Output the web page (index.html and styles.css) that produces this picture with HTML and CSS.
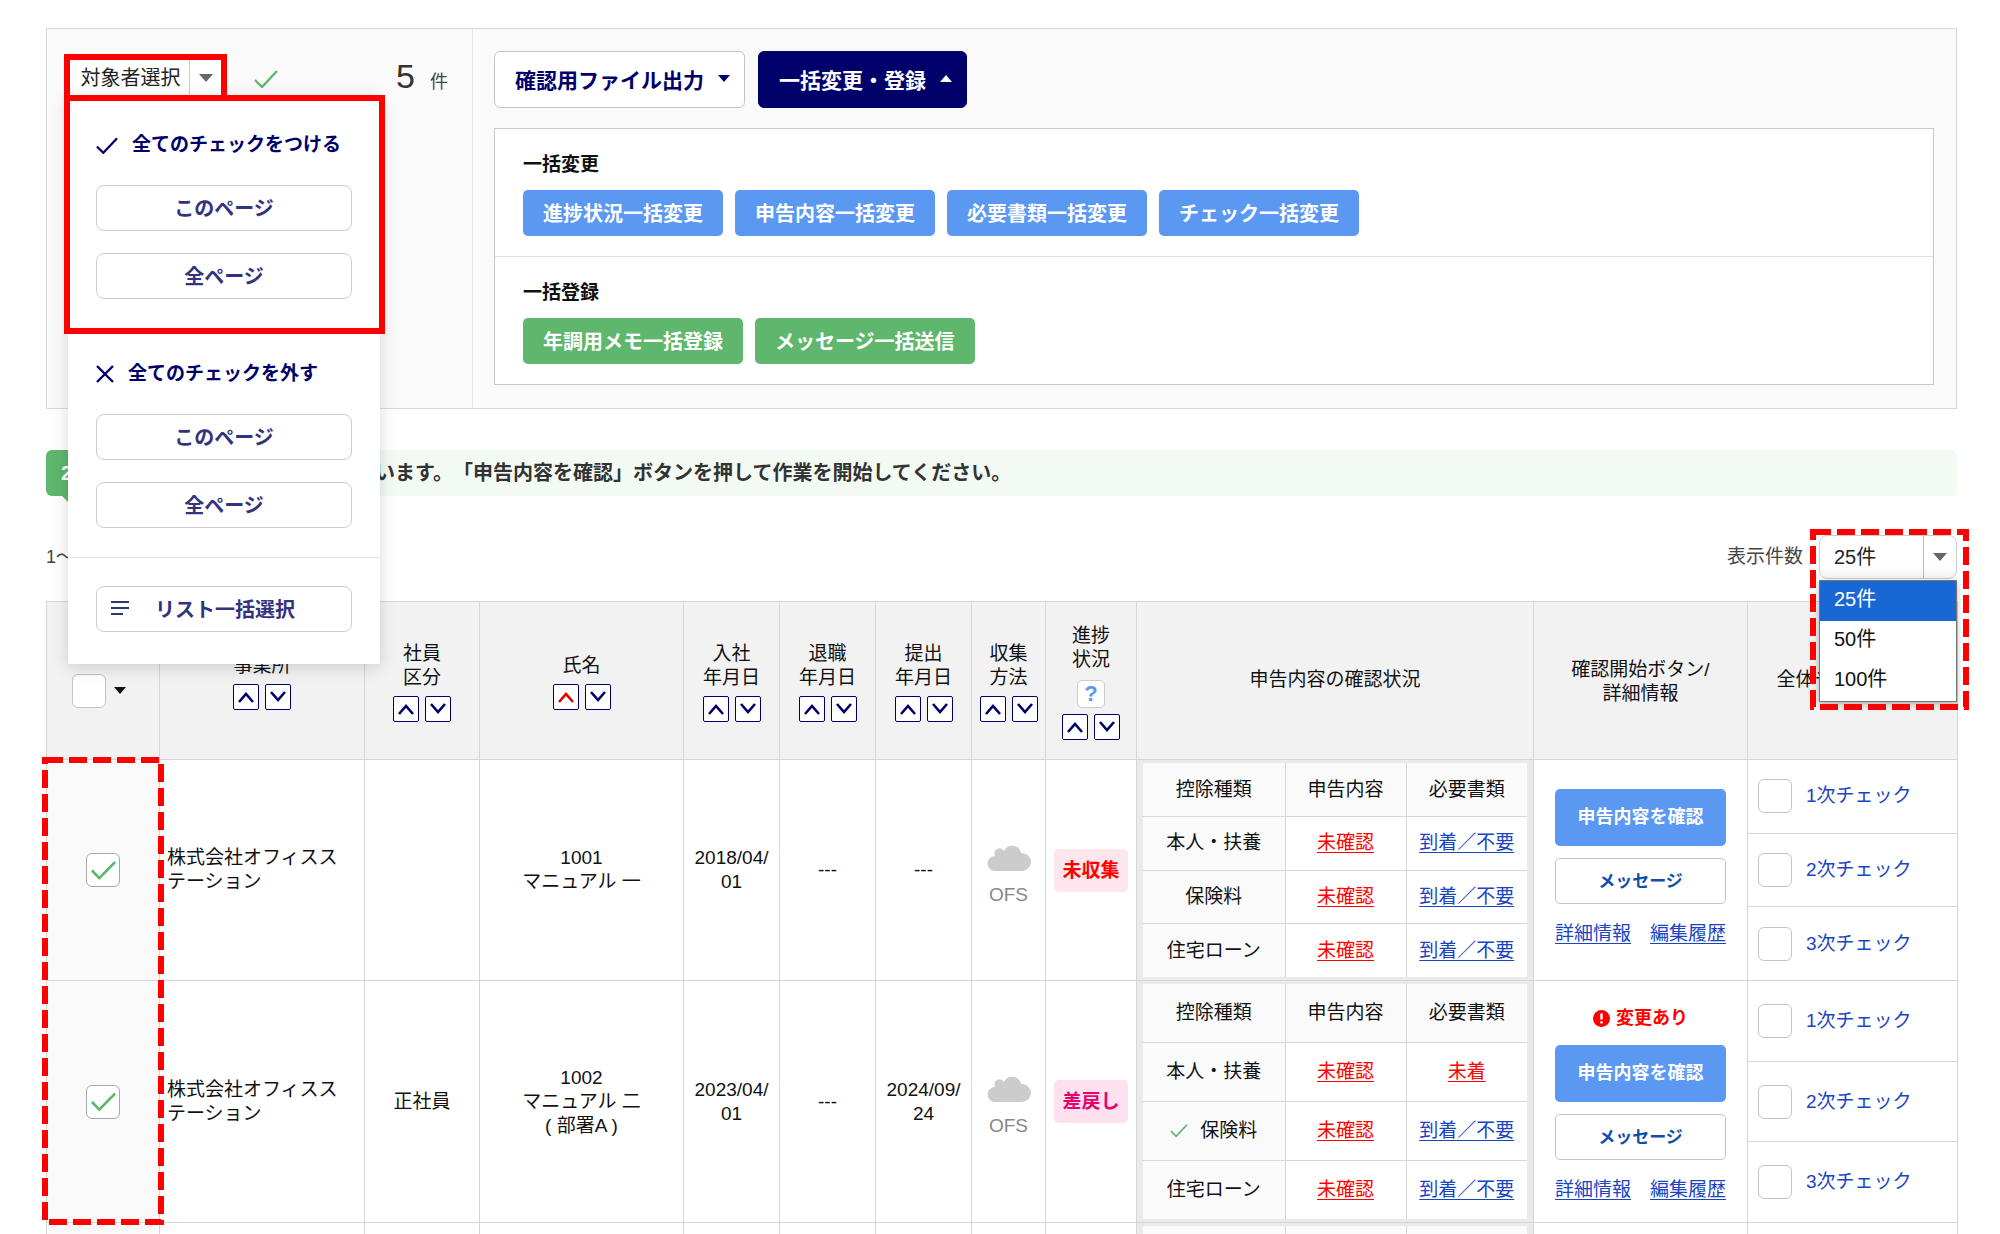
FILE: index.html
```html
<!DOCTYPE html>
<html lang="ja">
<head>
  <meta charset="UTF-8">
  <meta name="viewport" content="width=device-width, initial-scale=1.0">
  <title>年末調整 申告内容の確認</title>
  <link rel="stylesheet" href="styles.css">
</head>
<body>
  <!-- Shared icons -->
  <svg class="sprite" aria-hidden="true">
    <symbol id="check" viewBox="0 0 24 18"><path d="M1 10l7 7L23 1" fill="none" stroke="currentColor" stroke-width="2.4"/></symbol>
    <symbol id="cross" viewBox="0 0 18 18"><path d="M1 1l16 16M17 1L1 17" fill="none" stroke="currentColor" stroke-width="2.4"/></symbol>
    <symbol id="caret" viewBox="0 0 14 8"><path d="M0 0h14L7 8z" fill="currentColor"/></symbol>
    <symbol id="up" viewBox="0 0 16 12"><path d="M1 11l7-8 7 8" fill="none" stroke="currentColor" stroke-width="2.6"/></symbol>
    <symbol id="down" viewBox="0 0 16 12"><path d="M1 1l7 8 7-8" fill="none" stroke="currentColor" stroke-width="2.6"/></symbol>
    <symbol id="cloud" viewBox="0 0 44 28"><path d="M8 28a7.5 7.5 0 0 1 0-15A5 5 0 0 1 17 8a9 9 0 0 1 17 2h1a9 9 0 0 1 0 18z" fill="currentColor"/></symbol>
  </svg>

  <!-- Selection and bulk actions -->
  <section class="panel">
    <div class="selection">
      <div class="target">
        <button type="button" class="target-button">
          <span class="target-label">対象者選択</span>
          <span class="target-caret"><svg width="14" height="8"><use href="#caret"/></svg></span>
        </button>
        <div class="menu">
          <div class="menu-group menu-on">
            <h3><svg width="22" height="17"><use href="#check"/></svg>全てのチェックをつける</h3>
            <button type="button">このページ</button>
            <button type="button">全ページ</button>
            <div class="highlight"></div>
          </div>
          <div class="menu-group menu-off">
            <h3><svg width="18" height="18"><use href="#cross"/></svg>全てのチェックを外す</h3>
            <button type="button">このページ</button>
            <button type="button">全ページ</button>
          </div>
          <div class="menu-group menu-list">
            <button type="button">
              <svg width="18" height="14" viewBox="0 0 18 14"><path d="M0 1h18M0 7h18M0 13h12" stroke="currentColor" stroke-width="2"/></svg>
              リスト一括選択
            </button>
          </div>
        </div>
        <div class="highlight"></div>
      </div>
      <svg class="selection-check" width="24" height="18"><use href="#check"/></svg>
      <p class="selection-count"><strong>5</strong>件</p>
    </div>

    <div class="actions">
      <div class="toolbar">
        <button type="button" class="tool">確認用ファイル出力<svg width="12" height="7"><use href="#caret"/></svg></button>
        <button type="button" class="tool tool-active">一括変更・登録<svg class="flip" width="12" height="7"><use href="#caret"/></svg></button>
      </div>
      <div class="bulk">
        <div class="bulk-group">
          <h2>一括変更</h2>
          <div class="bulk-buttons">
            <button type="button" class="fill blue">進捗状況一括変更</button>
            <button type="button" class="fill blue">申告内容一括変更</button>
            <button type="button" class="fill blue">必要書類一括変更</button>
            <button type="button" class="fill blue">チェック一括変更</button>
          </div>
        </div>
        <div class="bulk-group">
          <h2>一括登録</h2>
          <div class="bulk-buttons">
            <button type="button" class="fill green">年調用メモ一括登録</button>
            <button type="button" class="fill green">メッセージ一括送信</button>
          </div>
        </div>
      </div>
    </div>
  </section>

  <div class="notice">
    <span class="notice-count">2</span>
    <p>います。「申告内容を確認」ボタンを押して作業を開始してください。</p>
  </div>

  <div class="listbar">
    <span class="range">1〜</span>
    <label for="per-page">表示件数</label>
    <div class="per-page">
      <select id="per-page">
        <option>25件</option>
        <option>50件</option>
        <option>100件</option>
      </select>
      <span class="per-page-caret"><svg width="14" height="8"><use href="#caret"/></svg></span>
      <ul class="options">
        <li class="current">25件</li>
        <li>50件</li>
        <li>100件</li>
      </ul>
      <svg class="dashed"><rect x="3" y="3"/></svg>
    </div>
  </div>

  <div class="list">
    <table class="staff">
      <colgroup>
        <col class="c-select"><col class="c-office"><col class="c-type"><col class="c-name">
        <col class="c-date"><col class="c-date"><col class="c-date"><col class="c-method">
        <col class="c-status"><col class="c-deduct"><col class="c-open"><col class="c-check">
      </colgroup>
      <thead>
        <tr>
          <th class="head-select"><div><input type="checkbox" aria-label="全選択"><svg width="12" height="7"><use href="#caret"/></svg></div></th>
          <th>事業所<div class="sort"><button type="button"><svg width="16" height="12"><use href="#up"/></svg></button><button type="button"><svg width="16" height="12"><use href="#down"/></svg></button></div></th>
          <th>社員<br>区分<div class="sort"><button type="button"><svg width="16" height="12"><use href="#up"/></svg></button><button type="button"><svg width="16" height="12"><use href="#down"/></svg></button></div></th>
          <th>氏名<div class="sort"><button type="button" class="sorted"><svg width="16" height="12"><use href="#up"/></svg></button><button type="button"><svg width="16" height="12"><use href="#down"/></svg></button></div></th>
          <th>入社<br>年月日<div class="sort"><button type="button"><svg width="16" height="12"><use href="#up"/></svg></button><button type="button"><svg width="16" height="12"><use href="#down"/></svg></button></div></th>
          <th>退職<br>年月日<div class="sort"><button type="button"><svg width="16" height="12"><use href="#up"/></svg></button><button type="button"><svg width="16" height="12"><use href="#down"/></svg></button></div></th>
          <th>提出<br>年月日<div class="sort"><button type="button"><svg width="16" height="12"><use href="#up"/></svg></button><button type="button"><svg width="16" height="12"><use href="#down"/></svg></button></div></th>
          <th>収集<br>方法<div class="sort"><button type="button"><svg width="16" height="12"><use href="#up"/></svg></button><button type="button"><svg width="16" height="12"><use href="#down"/></svg></button></div></th>
          <th>進捗<br>状況<button type="button" class="help">?</button><div class="sort"><button type="button"><svg width="16" height="12"><use href="#up"/></svg></button><button type="button"><svg width="16" height="12"><use href="#down"/></svg></button></div></th>
          <th class="plain">申告内容の確認状況</th>
          <th>確認開始ボタン/<br>詳細情報</th>
          <th class="plain">全体チェック状況</th>
        </tr>
      </thead>
      <tbody>
        <tr>
          <td class="select"><input type="checkbox" aria-label="1001" checked></td>
          <td class="office">株式会社オフィスステーション</td>
          <td></td>
          <td>1001<br>マニュアル 一</td>
          <td>2018/04/<br>01</td>
          <td>---</td>
          <td>---</td>
          <td class="method"><svg width="44" height="28"><use href="#cloud"/></svg><span>OFS</span></td>
          <td><span class="badge">未収集</span></td>
          <td class="deduct-cell">
            <table class="deduct">
              <tr><th>控除種類</th><th>申告内容</th><th>必要書類</th></tr>
              <tr><th>本人・扶養</th><td><a href="#" class="alert">未確認</a></td><td><a href="#">到着／不要</a></td></tr>
              <tr><th>保険料</th><td><a href="#" class="alert">未確認</a></td><td><a href="#">到着／不要</a></td></tr>
              <tr><th>住宅ローン</th><td><a href="#" class="alert">未確認</a></td><td><a href="#">到着／不要</a></td></tr>
            </table>
          </td>
          <td class="open">
            <button type="button" class="fill blue">申告内容を確認</button>
            <button type="button" class="message">メッセージ</button>
            <div class="links"><a href="#">詳細情報</a><a href="#">編集履歴</a></div>
          </td>
          <td class="check-cell">
            <div class="checks">
              <label><input type="checkbox">1次チェック</label>
              <label><input type="checkbox">2次チェック</label>
              <label><input type="checkbox">3次チェック</label>
            </div>
          </td>
        </tr>
        <tr>
          <td class="select"><input type="checkbox" aria-label="1002" checked></td>
          <td class="office">株式会社オフィスステーション</td>
          <td>正社員</td>
          <td>1002<br>マニュアル 二<br>( 部署A )</td>
          <td>2023/04/<br>01</td>
          <td>---</td>
          <td>2024/09/<br>24</td>
          <td class="method"><svg width="44" height="28"><use href="#cloud"/></svg><span>OFS</span></td>
          <td><span class="badge badge-return">差戻し</span></td>
          <td class="deduct-cell">
            <table class="deduct">
              <tr><th>控除種類</th><th>申告内容</th><th>必要書類</th></tr>
              <tr><th>本人・扶養</th><td><a href="#" class="alert">未確認</a></td><td><a href="#" class="alert">未着</a></td></tr>
              <tr><th><svg class="done" width="18" height="13"><use href="#check"/></svg>保険料</th><td><a href="#" class="alert">未確認</a></td><td><a href="#">到着／不要</a></td></tr>
              <tr><th>住宅ローン</th><td><a href="#" class="alert">未確認</a></td><td><a href="#">到着／不要</a></td></tr>
            </table>
          </td>
          <td class="open">
            <p class="changed">
              <svg width="17" height="17" viewBox="0 0 17 17"><circle cx="8.5" cy="8.5" r="8.5" fill="currentColor"/><path d="M8.5 3.5v6M8.5 11.2v2.3" stroke="#fff" stroke-width="2.4"/></svg>
              変更あり
            </p>
            <button type="button" class="fill blue">申告内容を確認</button>
            <button type="button" class="message">メッセージ</button>
            <div class="links"><a href="#">詳細情報</a><a href="#">編集履歴</a></div>
          </td>
          <td class="check-cell">
            <div class="checks">
              <label><input type="checkbox">1次チェック</label>
              <label><input type="checkbox">2次チェック</label>
              <label><input type="checkbox">3次チェック</label>
            </div>
          </td>
        </tr>
        <tr class="next">
          <td class="select"></td><td></td><td></td><td></td><td></td><td></td><td></td><td></td><td></td>
          <td class="deduct-cell">
            <table class="deduct"><tr><th></th><th></th><th></th></tr></table>
          </td>
          <td></td><td></td>
        </tr>
      </tbody>
    </table>
    <svg class="dashed"><rect x="3" y="3"/></svg>
  </div>
</body>
</html>
```
FILE: styles.css
```css
* {
  box-sizing: border-box;
}
body {
  margin: 0;
  padding: 28px 43px 0 46px;
  height: 100vh;
  overflow: hidden;
  background: #fff;
  color: #111;
  font-family: "Liberation Sans", "Noto Sans CJK JP", sans-serif;
  font-size: 19px;
  line-height: 24px;
  text-spacing-trim: space-all;
}
h2, h3, p, ul {
  margin: 0;
  padding: 0;
}
button, select {
  font-family: inherit;
  padding: 0;
  cursor: pointer;
}
a {
  color: #1a44c2;
  text-decoration: underline;
  text-underline-offset: 3px;
}
.sprite {
  display: none;
}

/* top panel */
.panel {
  display: flex;
  border: 1px solid #d8d8d8;
  background: #fafafa;
}
.selection {
  width: 426px;
  border-right: 1px solid #e8e8e8;
  padding: 29px 24px 0 21px;
  display: flex;
  align-items: flex-start;
}
.target {
  position: relative;
  width: 155px;
  z-index: 5;
}
.target-button {
  display: flex;
  width: 100%;
  height: 38px;
  border: none;
  background: #fff;
  font-size: 20px;
  color: #222;
}
.target-label {
  flex: 1;
  padding-left: 4px;
  line-height: 40px;
}
.target-caret {
  display: flex;
  align-items: center;
  justify-content: center;
  width: 34px;
  height: 40px;
  padding-right: 2px;
  border-left: 1px solid #ccc;
  color: #666;
}
.highlight {
  position: absolute;
  inset: -4px -4px -5px;
  border: 6px solid #f00;
  pointer-events: none;
}
.menu {
  position: absolute;
  top: 37px;
  left: 0;
  width: 312px;
  background: #fff;
  box-shadow: 0 4px 16px rgba(0, 0, 0, 0.15);
}
.menu-group {
  position: relative;
  display: flex;
  flex-direction: column;
  gap: 22px;
  padding: 28px 28px 29px;
}
.menu-group h3 {
  display: flex;
  align-items: center;
  gap: 14px;
  margin-bottom: 6px;
  font-size: 19px;
  line-height: 24px;
  color: #00006b;
}
.menu-group button {
  height: 46px;
  padding-bottom: 2px;
  border: 1px solid #ccc;
  border-radius: 8px;
  background: #fff;
  color: #33337d;
  font-size: 20px;
  font-weight: bold;
}
.menu-on {
  padding-top: 38px;
  padding-bottom: 35px;
}
.menu-on .highlight {
  inset: 0 -5px 0 -4px;
}
.menu-list {
  border-top: 1px solid #e4e4e4;
  padding-bottom: 32px;
}
.menu-list button {
  display: flex;
  align-items: center;
  gap: 26px;
  padding-left: 14px;
}
.selection-check {
  margin: 12px 0 0 31px;
  color: #5eb76c;
}
.selection-count {
  margin-left: auto;
  color: #444;
  line-height: 36px;
  font-size: 18px;
}
.selection-count strong {
  margin-right: 15px;
  color: #333;
  font-size: 34px;
  font-weight: normal;
}
.actions {
  flex: 1;
  padding: 22px 22px 23px 21px;
}
.toolbar {
  display: flex;
  gap: 13px;
  margin-bottom: 20px;
}
.tool {
  display: flex;
  align-items: center;
  gap: 14px;
  height: 57px;
  padding: 0 14px 2px 20px;
  border: 1px solid #c4c4c4;
  border-radius: 6px;
  background: #fff;
  color: #00006b;
  font-size: 21px;
  font-weight: bold;
}
.tool-active {
  border-color: #00006b;
  background: #00006b;
  color: #fff;
}
.flip {
  transform: rotate(180deg);
}
.bulk {
  border: 1px solid #c8c8c8;
  background: #fff;
}
.bulk-group {
  padding: 24px 28px 20px;
}
.bulk-group + .bulk-group {
  border-top: 1px solid #e0e0e0;
}
.bulk-group h2 {
  margin-bottom: 13px;
  font-size: 19px;
  font-weight: bold;
  line-height: 24px;
}
.bulk-buttons {
  display: flex;
  gap: 12px;
}
.fill {
  height: 46px;
  padding: 0 20px 2px;
  border: none;
  border-radius: 5px;
  color: #fff;
  font-size: 20px;
  font-weight: bold;
}
.blue {
  background: #5a98f2;
}
.green {
  background: #5eb76c;
}

/* notice */
.notice {
  display: flex;
  height: 46px;
  margin-top: 41px;
  border-radius: 6px;
  background: #f2faf3;
  font-size: 20px;
  font-weight: bold;
  line-height: 46px;
  color: #333;
}
.notice-count {
  position: relative;
  width: 280px;
  padding-left: 15px;
  border-radius: 6px;
  background: #5eb76c;
  color: #fff;
}
.notice-count::after {
  content: "";
  position: absolute;
  top: 46px;
  left: 16px;
  border: 8px solid transparent;
  border-top-color: #5eb76c;
}
.notice p {
  margin-left: 49px;
}

/* list bar */
.listbar {
  display: flex;
  align-items: center;
  margin: 39px 0 22px;
  color: #444;
}
.range {
  flex: 1;
  font-size: 18px;
}
.listbar label {
  margin-right: 16px;
}
.per-page {
  position: relative;
  width: 138px;
  z-index: 3;
}
.per-page select {
  display: block;
  appearance: none;
  width: 100%;
  height: 44px;
  padding-left: 14px;
  border: 1px solid #ccc;
  border-radius: 8px;
  background: linear-gradient(#fff 70%, #f2f2f2);
  color: #222;
  font-size: 20px;
}
.per-page-caret {
  position: absolute;
  top: 1px;
  right: 1px;
  display: flex;
  align-items: center;
  justify-content: center;
  width: 33px;
  height: 42px;
  border-left: 1px solid #bbb;
  color: #666;
  pointer-events: none;
}
.options {
  position: absolute;
  top: 45px;
  left: 0;
  width: 100%;
  border: 1px solid #767676;
  background: #fff;
  box-shadow: 0 2px 6px rgba(0, 0, 0, 0.3);
  list-style: none;
  color: #111;
  font-size: 20px;
}
.options li {
  padding: 0 0 3px 14px;
  line-height: 37px;
}
.options .current {
  background: #1967d2;
  color: #fff;
}
.dashed {
  position: absolute;
  pointer-events: none;
}
.dashed rect {
  width: calc(100% - 6px);
  height: calc(100% - 6px);
  fill: none;
  stroke: #f00;
  stroke-width: 6px;
  stroke-dasharray: 18 6;
}
.per-page .dashed {
  top: -6px;
  left: -9px;
  width: 159px;
  height: 181px;
}

/* staff table */
.list {
  position: relative;
}
.list > .dashed {
  top: 156px;
  left: -4px;
  width: 122px;
  height: 468px;
}
.staff {
  width: 100%;
  table-layout: fixed;
  border-collapse: collapse;
}
.c-select { width: 113px; }
.c-office { width: 205px; }
.c-type { width: 115px; }
.c-name { width: 204px; }
.c-date { width: 96px; }
.c-method { width: 74px; }
.c-status { width: 91px; }
.c-deduct { width: 397px; }
.c-open { width: 214px; }
.c-check { width: 210px; }
th {
  font-weight: normal;
}
td {
  text-align: center;
}
.staff > thead th {
  height: 158px;
  padding: 2px 0 0;
  border: 1px solid #d6d6d6;
  background: #f2f2f2;
}
.staff > thead .plain {
  padding: 0 0 2px;
}
.head-select div {
  display: flex;
  align-items: center;
  gap: 8px;
  padding: 18px 0 0 25px;
}
input[type="checkbox"] {
  appearance: none;
  display: block;
  flex: none;
  width: 34px;
  height: 34px;
  margin: 0;
  border: 1px solid #c4c4c4;
  border-radius: 6px;
  background: #fff;
}
.select input[type="checkbox"] {
  position: relative;
  margin: 0 auto;
  border-color: #a8a8a8;
}
.select input:checked::after {
  content: "";
  position: absolute;
  left: 4px;
  top: 7px;
  width: 25px;
  height: 19px;
  background: #5eb76c;
  clip-path: polygon(0 55%, 7% 44%, 33% 80%, 93% 0, 100% 10%, 33% 100%);
}
.sort {
  display: flex;
  justify-content: center;
  gap: 6px;
  margin-top: 6px;
}
.sort button {
  display: flex;
  align-items: center;
  justify-content: center;
  width: 26px;
  height: 26px;
  border: 1px solid #00006b;
  border-radius: 2px;
  background: #fff;
  color: #00006b;
}
.sort .sorted {
  color: #e00000;
}
.help {
  display: block;
  width: 28px;
  height: 28px;
  margin: 8px auto 0;
  border: 1px solid #ccc;
  border-radius: 5px;
  background: #fff;
  color: #5a98f2;
  font-size: 22px;
  font-weight: bold;
}
.staff > tbody > tr {
  height: 221px;
}
.staff > tbody > tr > td {
  padding: 0;
  border: 1px solid #d6d6d6;
}
.staff .select {
  background: #fafafa;
}
.staff > tbody > tr > .office {
  padding: 0 15px 0 7px;
  text-align: left;
}
.staff > tbody > tr > .method {
  padding-top: 9px;
  color: #888;
}
.method svg {
  display: block;
  margin: 0 auto 12px;
  color: #ccc;
}
.badge {
  display: inline-block;
  padding: 0 8px;
  border-radius: 5px;
  background: #ffe6ec;
  color: #f00;
  font-weight: bold;
  line-height: 43px;
}
.badge-return {
  background: #ffe0ee;
  color: #e6006e;
}

/* the deduction table fills its cell whatever the row height */
.staff > tbody > tr > .deduct-cell {
  height: 1px;
  padding: 3px 6px;
  background: #eaeaea;
}
.deduct {
  width: 100%;
  height: 100%;
  table-layout: fixed;
  border-collapse: collapse;
}
.deduct th, .deduct td {
  height: 53px;
  padding: 0;
  border: 1px solid #d6d6d6;
  background: #fff;
}
.deduct tr:first-child > * {
  border-top: none;
}
.deduct tr:last-child > * {
  border-bottom: none;
}
.deduct tr > :first-child {
  width: 142px;
  border-left: none;
}
.deduct tr > :last-child {
  border-right: none;
}
.deduct th {
  background: #fafafa;
}
.deduct .alert, .alert {
  color: #f00;
}
.done {
  margin-right: 12px;
  color: #5eb76c;
}
.staff > tbody > tr > .open {
  padding: 15px 21px;
}
.open button {
  display: block;
  width: 100%;
}
.open .fill {
  height: 57px;
  padding: 0 0 5px;
  margin-bottom: 12px;
  font-size: 18px;
}
.message {
  height: 46px;
  padding-bottom: 3px;
  border: 1px solid #c4c4c4;
  border-radius: 5px;
  background: #fff;
  color: #0f4fa8;
  font-size: 17px;
  font-weight: bold;
}
.links {
  display: flex;
  justify-content: space-between;
  margin: 16px 0 3px;
  line-height: 28px;
}
.changed {
  display: flex;
  align-items: center;
  justify-content: center;
  gap: 6px;
  padding: 10px 0;
  margin-bottom: 5px;
  color: #f00;
  font-size: 18px;
  font-weight: bold;
}
.staff > tbody > tr > .check-cell {
  height: 1px;
}
.checks {
  display: flex;
  flex-direction: column;
  height: 100%;
}
.checks label {
  flex: 1;
  display: flex;
  align-items: center;
  gap: 14px;
  padding-left: 10px;
  color: #1a44c2;
}
.checks label + label {
  border-top: 1px solid #d6d6d6;
}

/* top edge of the following row */
.staff > tbody > .next {
  height: auto;
}
.staff > tbody > .next > td {
  border-bottom: none;
}
.staff > tbody > .next > .deduct-cell {
  padding-bottom: 0;
}
.next .deduct th {
  height: 12px;
}
```
